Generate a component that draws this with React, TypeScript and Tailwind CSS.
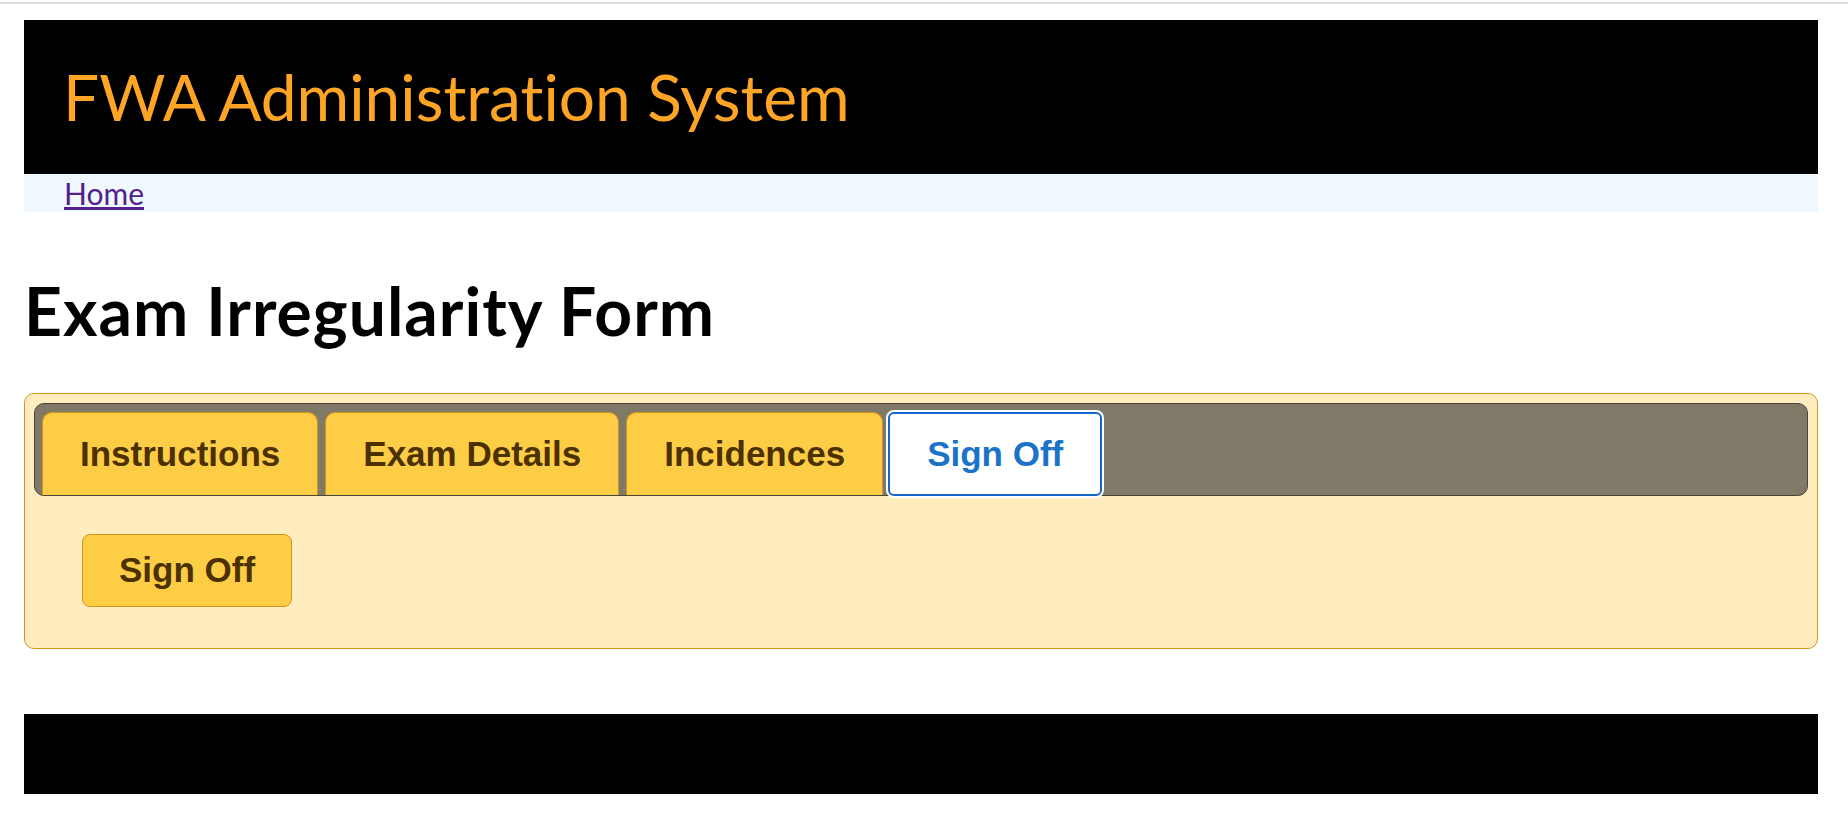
const tabs = ["Instructions", "Exam Details", "Incidences", "Sign Off"]

function App() {
  const active = "Sign Off"

  return (
    <div className="min-h-[826px] bg-white">
      <div className="mt-[2px] h-[2px] bg-[#dcdce4]" />

      <div className="ml-[24px] mr-[30px] mt-[16px]">
        {/* header */}
        <div className="flex h-[154px] items-center bg-black pl-[39px]">
          <span className="font-['Lato',sans-serif] text-[64px] leading-none text-[#ffa526] [font-variant-ligatures:none]">
            FWA Administration System
          </span>
        </div>

        {/* breadcrumb */}
        <div className="h-[38px] bg-[#eff7ff] pl-[40px]">
          <a
            href="#"
            className="font-['Lato',sans-serif] text-[30px] leading-[38px] text-[#541f8b] underline"
          >
            Home
          </a>
        </div>

        <h1 className="mt-[60px] font-['Lato',sans-serif] text-[66px] font-bold leading-[77px] tracking-[1px] text-black">
          Exam Irregularity Form
        </h1>

        {/* tab panel */}
        <div className="mt-[44px] rounded-[10px] border border-[#d5951c] bg-[#ffedc0] p-[9px]">
          <div className="flex items-end gap-[7px] rounded-[10px] border border-[#4a4538] bg-[#817968] pl-[7px] pt-[8px]">
            {tabs.map((tab) =>
              tab === active ? (
                <button
                  key={tab}
                  className="-mb-[1px] -ml-[2px] h-[84px] rounded-[6px] border-2 border-[#1766d0] bg-white px-[37px] font-['Liberation_Sans',Arial,sans-serif] text-[35px] font-bold text-[#1a73c8] shadow-[0_0_0_2px_#ffffff]"
                >
                  {tab}
                </button>
              ) : (
                <button
                  key={tab}
                  className="h-[83px] rounded-t-[10px] border border-b-0 border-[#d5951c] bg-[#fecd46] px-[37px] font-['Liberation_Sans',Arial,sans-serif] text-[35px] font-bold text-[#4b3000]"
                >
                  {tab}
                </button>
              )
            )}
          </div>

          <div className="pb-[32px] pl-[48px] pt-[38px]">
            <button className="h-[73px] rounded-[8px] border border-[#d5951c] bg-[#fecd46] px-[36px] font-['Liberation_Sans',Arial,sans-serif] text-[35px] font-bold text-[#4b3000]">
              Sign Off
            </button>
          </div>
        </div>

        {/* footer */}
        <div className="mt-[65px] h-[80px] bg-black" />
      </div>
    </div>
  )
}

export default App
